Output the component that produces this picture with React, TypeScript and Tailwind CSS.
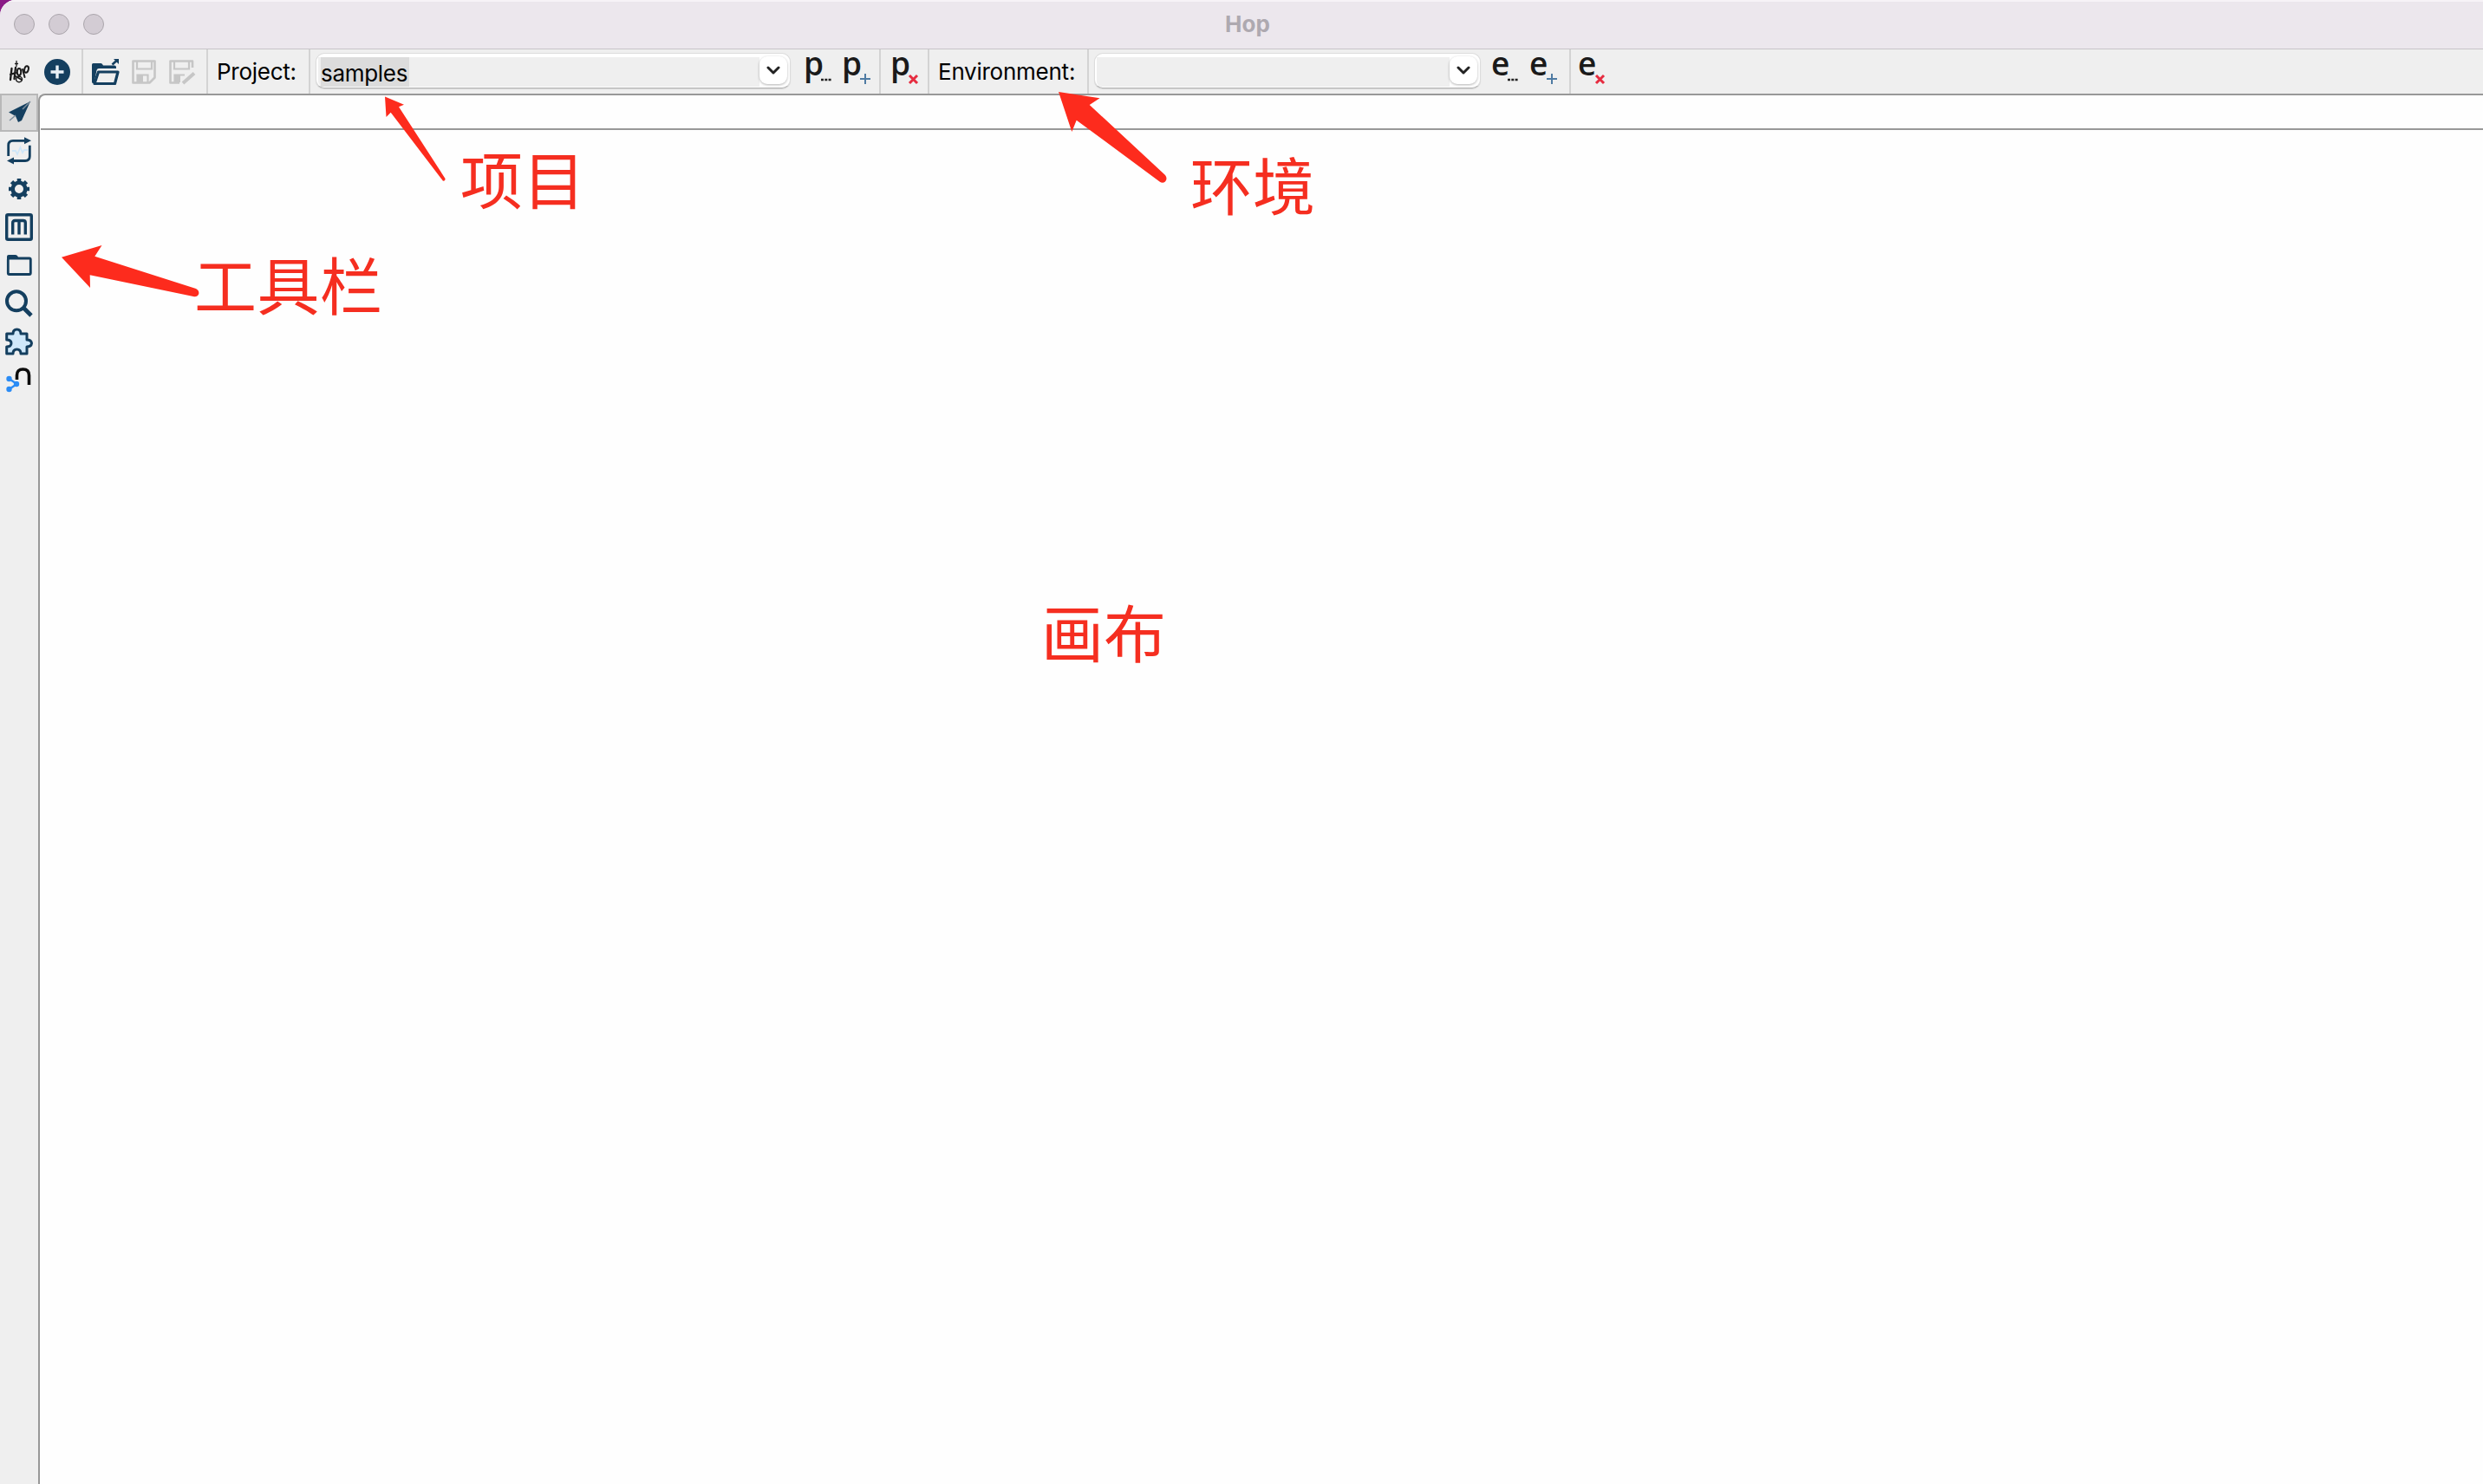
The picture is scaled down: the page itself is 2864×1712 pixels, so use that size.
import type { ReactNode } from "react";

const NAVY = "#143f5f";
const RED = "#fd2b1d";

export default function App() {
  return (
    <div className="w-[2864px] h-[1712px] bg-[#8a1a86] overflow-hidden font-['Inter',sans-serif]">
      <div className="relative w-full h-full flex flex-col bg-[#efefef] rounded-tl-[18px] overflow-hidden">
        <TitleBar />
        <Toolbar />
        <div className="flex flex-1">
          <Sidebar />
          <main className="flex-1 flex flex-col bg-[#fefefe] border-t-2 border-l-2 border-[#989898] rounded-tl-[8px]">
            <div className="h-[40px] ml-px border-b-2 border-[#989898]" />
          </main>
        </div>
        <Annotations />
      </div>
    </div>
  );
}

function TitleBar() {
  return (
    <header className="relative h-[57px] shrink-0 flex items-center justify-center bg-[#ece7ed] border-t-2 border-t-[#f7f3f7] border-b border-b-[#c8c4c8]">
      <div className="absolute left-[16px] top-[14px] flex gap-4">
        {[0, 1, 2].map((i) => (
          <span
            key={i}
            className="w-[24px] h-[24px] rounded-full bg-[#d3ccd4] border border-[#aaa5ab]"
          />
        ))}
      </div>
      <h1 className="pl-[14px] pb-[3px] text-[26px] leading-none font-bold text-[#aea9b0]">
        Hop
      </h1>
    </header>
  );
}

function Toolbar() {
  return (
    <div className="h-[51px] shrink-0 flex text-black">
      <div className="w-[94px] pl-[10px] flex items-center gap-[15px]">
        <HopLogo />
        <svg width="30" height="30" viewBox="0 0 30 30">
          <circle cx="15" cy="15" r="15" fill={NAVY} />
          <path d="M15 7.5v15M7.5 15h15" stroke="#e9f1f7" strokeWidth="3.4" />
        </svg>
      </div>
      <Separator />
      <div className="w-[142px] pl-[10px] flex items-center gap-[13px]">
        <OpenIcon />
        <SaveIcon />
        <SaveAsIcon />
      </div>
      <Separator />
      <Label className="w-[116px] pl-[10px]">Project:</Label>
      <Separator />
      <div className="w-[656px] pl-[6px] flex">
        <Combo className="w-[548px]" value="samples" />
        <div className="flex pl-[15px]">
          <LetterButton letter="p" badge="dots" />
          <LetterButton letter="p" badge="plus" />
        </div>
      </div>
      <Separator />
      <div className="w-[54px] pl-[11px] flex">
        <LetterButton letter="p" badge="cross" />
      </div>
      <Separator />
      <Label className="w-[182px] pl-[10px]">Environment:</Label>
      <Separator />
      <div className="w-[554px] pl-[6px] flex">
        <Combo className="w-[446px]" value="" />
        <div className="flex pl-[12px]">
          <LetterButton letter="e" badge="dots" />
          <LetterButton letter="e" badge="plus" />
        </div>
      </div>
      <Separator />
      <div className="pl-[8px] flex">
        <LetterButton letter="e" badge="cross" />
      </div>
    </div>
  );
}

function Separator() {
  return <div className="w-[2px] shrink-0 bg-[#d3d3d3]" />;
}

interface LabelProps {
  className: string;
  children: ReactNode;
}
function Label({ className, children }: LabelProps) {
  return (
    <div
      className={`shrink-0 flex items-center text-[26px] leading-none tracking-[-0.25px] whitespace-nowrap ${className}`}
    >
      {children}
    </div>
  );
}

interface ComboProps {
  className: string;
  value: string;
}
function Combo({ className, value }: ComboProps) {
  return (
    <div
      className={`mt-[4px] h-[41px] shrink-0 flex bg-white border border-[#dcdcdc] border-b-[#b4b4b4] rounded-[10px] shadow-[0_1px_1px_rgba(0,0,0,0.12)] ${className}`}
    >
      <div className="mt-[4px] ml-[2px] h-[34px] flex-1 flex bg-[#efefef] rounded-bl-[6px]">
        {value && (
          <span className="ml-[3px] h-[34px] w-[102px] pt-[2px] bg-[#dcdcdc] text-[26px] leading-[34px] tracking-[-0.3px]">
            {value}
          </span>
        )}
      </div>
      <div className="mt-[3px] mr-[3px] w-[32px] h-[32px] flex items-center justify-center bg-white rounded-[9px] shadow-[0_1px_3px_rgba(0,0,0,0.3)]">
        <svg width="16" height="10" viewBox="0 0 16 10" fill="none">
          <path
            d="M2 2l6 6 6-6"
            stroke="#222"
            strokeWidth="3"
            strokeLinecap="round"
            strokeLinejoin="round"
          />
        </svg>
      </div>
    </div>
  );
}

interface LetterButtonProps {
  letter: string;
  badge: "dots" | "plus" | "cross";
}
function LetterButton({ letter, badge }: LetterButtonProps) {
  return (
    <div className="relative w-[44px] shrink-0">
      <div className="-mt-[10px] font-['Open_Sans',sans-serif] font-semibold text-[37px] leading-[52px] text-[#1a1a1a]">
        {letter}
      </div>
      <svg
        className={`absolute top-[27px] ${letter === "p" ? "left-[19px]" : "left-[18px]"}`}
        width="16"
        height="14"
        viewBox="0 0 16 14"
        fill="none"
      >
        {badge === "dots" && (
          <path d="M1 8h3M5.3 8h3M9.6 8h3" stroke="#222" strokeWidth="2.6" />
        )}
        {badge === "plus" && (
          <path d="M8 1v12M2 7h12" stroke="#4f7ba3" strokeWidth="2" />
        )}
        {badge === "cross" && (
          <path d="M3 3l9 9M12 3l-9 9" stroke="#e62c40" strokeWidth="3" />
        )}
      </svg>
    </div>
  );
}

function HopLogo() {
  return (
    <svg
      width="26"
      height="30"
      viewBox="0 0 26 30"
      fill="none"
      stroke="#1c1c1c"
      strokeWidth="2"
      strokeLinecap="round"
    >
      <path d="M3.5 11L2 24M8 10L6.500 23M2 18l6-2" strokeWidth="2.3" />
      <path d="M9 2.500v6M7.500 5.500h3" strokeWidth="1.3" />
      <ellipse cx="12" cy="15" rx="2.200" ry="4" />
      <ellipse cx="12" cy="23.5" rx="3.500" ry="3.200" strokeWidth="1.5" />
      <path d="M16 12l2.500 9M8 20l7 4" />
      <ellipse cx="20.500" cy="12" rx="2.300" ry="3.800" transform="rotate(15 20.500 12)" />
    </svg>
  );
}

function OpenIcon() {
  return (
    <svg width="32" height="32" viewBox="0 0 32 32" fill="none">
      <path
        d="M0 7.5q0-1.5 1.500-1.500h9q1.500 0 2.500 2.500h13q2 0 2 2v1.500H8q-2 0-2.500 2L2.500 29H1.500Q0 29 0 27.500z"
        fill={NAVY}
      />
      <path
        d="M7.500 16H30l-3.500 13.500H3z"
        stroke={NAVY}
        strokeWidth="3.2"
        strokeLinejoin="round"
      />
      <path d="M23.500 7.500l5.500-5" stroke={NAVY} strokeWidth="2.600" />
      <path d="M25 1h6v6z" fill={NAVY} />
    </svg>
  );
}

function SaveIcon() {
  return (
    <svg width="30" height="30" viewBox="0 0 30 30" fill="none" stroke="#c6c6c6">
      <path
        d="M2.500 2.500h25v19l-6 6h-19z"
        strokeWidth="2.600"
        strokeLinejoin="round"
      />
      <path d="M7 3v8.500h17V3" strokeWidth="2.200" />
      <path d="M7.500 27v-8.500h12V27" strokeWidth="2.200" />
      <path d="M8 19h6v8H8z" fill="#c6c6c6" stroke="none" />
    </svg>
  );
}

function SaveAsIcon() {
  return (
    <svg width="32" height="30" viewBox="0 0 32 30" fill="none" stroke="#c6c6c6">
      <path
        d="M28 10V2.500H2.500v25H13"
        strokeWidth="2.600"
        strokeLinejoin="round"
      />
      <path d="M7 3v8.500h17V3" strokeWidth="2.200" />
      <path d="M7.500 27v-8.500H19" strokeWidth="2.200" />
      <path d="M8 19h6v8H8z" fill="#c6c6c6" stroke="none" />
      <path d="M17 28L30 16.500" strokeWidth="4" />
    </svg>
  );
}

const PERSPECTIVES: { id: string; icon: ReactNode }[] = [
  {
    id: "data-orchestration",
    icon: (
      <>
        <path d="M29 3L19 25l-4 2-3-7-8-4.500z" fill={NAVY} />
        <path d="M5 25l7-6M20 12l9-9" stroke="#7d8e9c" strokeWidth="1.500" />
      </>
    ),
  },
  {
    id: "execution",
    icon: (
      <>
        <path
          d="M8 16h4l2 4 3.500-8 2.500 6 2-3h4"
          stroke="#cfe6f8"
          strokeWidth="1.800"
        />
        <g stroke={NAVY} strokeWidth="2.800">
          <path d="M3.700 22V9.500q0-5.200 5.200-5.200H23" />
          <path d="M28.300 9.700V22.300q0 5.200-5.200 5.200H9" />
        </g>
        <path d="M22 .3l8 4-8 4zM10 23.500l-8 4 8 4z" fill={NAVY} />
      </>
    ),
  },
  {
    id: "metadata",
    icon: (
      <>
        <circle cx="16" cy="16" r="7.300" stroke={NAVY} strokeWidth="4.600" />
        {[0, 45, 90, 135].map((angle) => (
          <path
            key={angle}
            d="M16 4v4M16 24v4"
            stroke={NAVY}
            strokeWidth="4.600"
            transform={`rotate(${angle} 16 16)`}
          />
        ))}
      </>
    ),
  },
  {
    id: "neo4j-metadata",
    icon: (
      <>
        <rect
          x="1.700"
          y="1.700"
          width="28.600"
          height="28.600"
          rx="1.500"
          stroke={NAVY}
          strokeWidth="3.400"
        />
        <path
          d="M8.700 24.500V11q0-2.500 2.500-2.500h9.600q2.500 0 2.500 2.500v13.500M16 8.500v16"
          stroke={NAVY}
          strokeWidth="3.400"
        />
      </>
    ),
  },
  {
    id: "explorer",
    icon: (
      <>
        <path d="M2 8V6q0-2 2-2h8q2 0 3 2.500V9H2z" fill={NAVY} />
        <rect
          x="3.300"
          y="8"
          width="26"
          height="18.500"
          rx="1.500"
          stroke={NAVY}
          strokeWidth="2.800"
        />
      </>
    ),
  },
  {
    id: "search",
    icon: (
      <>
        <circle cx="13" cy="13.300" r="11" stroke={NAVY} strokeWidth="4" />
        <path d="M21 21l9 9" stroke={NAVY} strokeWidth="4.800" />
      </>
    ),
  },
  {
    id: "plugins",
    icon: (
      <path
        d="M1.700 7H9q0-5 4.500-5T18 7h7v7q5 0 5.500 4-.5 4-5.500 4v8h-7q0-5-4.500-5T9 30H1.700v-8Q7 22 7 18t-5.300-4z"
        fill="#cfe8fa"
        stroke={NAVY}
        strokeWidth="3"
        strokeLinejoin="round"
      />
    ),
  },
  {
    id: "neo4j",
    icon: (
      <>
        <path
          d="M13.500 16v-5q0-7 7-7t7 7v11"
          stroke="#0b0b0b"
          strokeWidth="3.600"
        />
        <path d="M4.500 15l9 6-9 6" stroke="#2b8cf5" strokeWidth="2.400" />
        <g fill="#2b8cf5">
          <circle cx="4.500" cy="15" r="3.200" />
          <circle cx="13" cy="21" r="3.200" />
          <circle cx="4.500" cy="27" r="3.200" />
        </g>
      </>
    ),
  },
];

function Sidebar() {
  return (
    <nav className="w-[44px] shrink-0 flex flex-col">
      {PERSPECTIVES.map(({ id, icon }, i) => (
        <div
          key={id}
          className={`w-[44px] h-[44px] flex items-center justify-center ${
            i === 0 ? "bg-[#dbdbdb] border-2 border-[#b8b8b8]" : ""
          }`}
        >
          <svg width="32" height="32" viewBox="0 0 32 32" fill="none">
            {icon}
          </svg>
        </div>
      ))}
    </nav>
  );
}

// Notes drawn on top of the window
function Annotations() {
  return (
    <div className="absolute inset-0 text-[72px] leading-none text-[#f52e20] whitespace-nowrap font-['Noto_Sans_CJK_SC',sans-serif]">
      <svg className="absolute left-[440px] top-[108px]" width="80" height="106" viewBox="440 108 80 106">
        <path
          d="M444 111.500L466 120.700L460 123.300L513.500 206Q514 209 511 208.800L450.700 129.700L445.500 135z"
          fill={RED}
        />
      </svg>
      <span className="absolute left-[531px] top-[168px]">项目</span>

      <svg className="absolute left-[1216px] top-[102px]" width="136" height="114" viewBox="1216 102 136 114">
        <path
          d="M1221 106L1268.500 113.300L1256.700 121L1344 202Q1347 206 1344 209.500Q1341 212 1337.500 209.500L1241.700 138.700L1236.300 152z"
          fill={RED}
        />
      </svg>
      <span className="absolute left-[1373px] top-[175px]">环境</span>

      <svg className="absolute left-[66px] top-[278px]" width="168" height="70" viewBox="66 278 168 70">
        <path
          d="M71 296.700L117.500 283L109.300 295.700L226 333Q230 335 229.300 339Q227.500 343 223 342L103.700 317.300L104 332z"
          fill={RED}
        />
      </svg>
      <span className="absolute left-[224px] top-[290px] tracking-[0.5px]">工具栏</span>

      <span className="absolute left-[1201px] top-[691px]">画布</span>
    </div>
  );
}
